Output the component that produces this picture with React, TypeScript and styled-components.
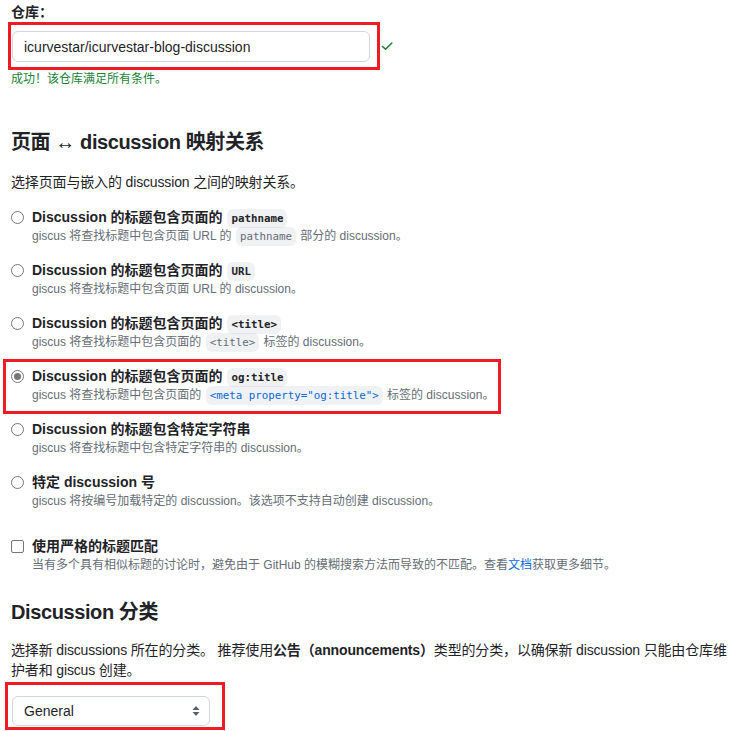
import React from 'react';
import styled, { createGlobalStyle } from 'styled-components';

const GlobalStyle = createGlobalStyle`
  body {
    margin: 0;
    background: #ffffff;
    color: #1f2328;
    font-family: "Liberation Sans", "Noto Sans CJK SC", sans-serif;
    font-size: 14px;
  }
`;

const Page = styled.div`
  width: 722px;
  padding: 2px 0 0 11px;
`;

const FieldLabel = styled.div`
  font-weight: 700;
  font-size: 14px;
  line-height: 20px;
`;

const InputRow = styled.div`
  display: flex;
  align-items: center;
`;

// red annotation frames drawn on the screenshot
const Highlight = styled.div<{ $pad: string; $margin: string; $width?: number }>`
  border: 3px solid #ed1c24;
  padding: ${(p) => p.$pad};
  margin: ${(p) => p.$margin};
  width: ${(p) => (p.$width ? `${p.$width}px` : 'auto')};
  box-sizing: border-box;
`;

const TextInput = styled.div`
  width: 358px;
  height: 31px;
  box-sizing: border-box;
  border: 1px solid #d0d7de;
  border-radius: 6px;
  padding: 0 11px;
  display: flex;
  align-items: center;
  font-size: 14px;
  color: #1f2328;
`;

const CheckIcon = styled.svg`
  width: 12px;
  height: 12px;
  margin-left: 1px;
  color: #1a7f37;
`;

const Success = styled.div`
  color: #1a7f37;
  font-size: 12px;
  line-height: 18px;
`;

const Heading = styled.h2<{ $top: number }>`
  margin: ${(p) => p.$top}px 0 0;
  font-size: 20px;
  font-weight: 700;
  line-height: 30px;
  letter-spacing: -0.4px;
`;

const Lead = styled.p<{ $top?: number }>`
  margin: ${(p) => p.$top ?? 15}px 0 0;
  font-size: 14px;
  line-height: 20px;
  letter-spacing: -0.15px;
`;

const OptionList = styled.div`
  display: flex;
  flex-direction: column;
  gap: 15px;
  margin-top: 15px;
`;

const Option = styled.div`
  display: flex;
  align-items: flex-start;
`;

const Radio = styled.span<{ $checked?: boolean }>`
  flex: none;
  width: 13px;
  height: 13px;
  box-sizing: border-box;
  border: 1px solid #767676;
  border-radius: 50%;
  margin: 4px 8px 0 0;
  display: flex;
  align-items: center;
  justify-content: center;
  &::after {
    content: '';
    display: ${(p) => (p.$checked ? 'block' : 'none')};
    width: 7px;
    height: 7px;
    border-radius: 50%;
    background: #767676;
  }
`;

const Checkbox = styled.span`
  flex: none;
  width: 13px;
  height: 13px;
  box-sizing: border-box;
  border: 1px solid #767676;
  border-radius: 2px;
  margin: 4px 8px 0 0;
`;

const OptionText = styled.div`
  display: flex;
  flex-direction: column;
`;

const OptionLabel = styled.div`
  font-weight: 700;
  font-size: 14px;
  line-height: 20px;
  height: 20px;
`;

const OptionDesc = styled.div`
  color: #656d76;
  font-size: 12px;
  line-height: 18px;
  height: 18px;
  white-space: nowrap;
`;

const Code = styled.code<{ $bold?: boolean; $blue?: boolean }>`
  font-family: "DejaVu Sans Mono", "Liberation Mono", monospace;
  font-size: 10.8px;
  line-height: 1;
  font-weight: ${(p) => (p.$bold ? 700 : 400)};
  color: ${(p) => (p.$blue ? '#0969da' : 'inherit')};
  background: rgba(175, 184, 193, 0.2);
  border-radius: 6px;
  padding: 3px 4px;
  margin: 0 1px;
`;

const Link = styled.a`
  color: #0969da;
  text-decoration: none;
`;

const StrictBlock = styled.div`
  margin-top: 26px;
`;

const SelectBox = styled.div`
  width: 198px;
  height: 30px;
  box-sizing: border-box;
  border: 1px solid #d0d7de;
  border-radius: 6px;
  padding: 0 9px 0 11px;
  display: flex;
  align-items: center;
  justify-content: space-between;
  font-size: 14px;
`;

const options = [
  {
    label: <>Discussion 的标题包含页面的 <Code $bold>pathname</Code></>,
    desc: <>giscus 将查找标题中包含页面 URL 的 <Code>pathname</Code> 部分的 discussion。</>,
  },
  {
    label: <>Discussion 的标题包含页面的 <Code $bold>URL</Code></>,
    desc: <>giscus 将查找标题中包含页面 URL 的 discussion。</>,
  },
  {
    label: <>Discussion 的标题包含页面的 <Code $bold>&lt;title&gt;</Code></>,
    desc: <>giscus 将查找标题中包含页面的 <Code>&lt;title&gt;</Code> 标签的 discussion。</>,
  },
  {
    label: <>Discussion 的标题包含页面的 <Code $bold>og:title</Code></>,
    desc: <>giscus 将查找标题中包含页面的 <Code $blue>&lt;meta property="og:title"&gt;</Code> 标签的 discussion。</>,
    checked: true,
  },
  {
    label: <>Discussion 的标题包含特定字符串</>,
    desc: <>giscus 将查找标题中包含特定字符串的 discussion。</>,
  },
  {
    label: <>特定 discussion 号</>,
    desc: <>giscus 将按编号加载特定的 discussion。该选项不支持自动创建 discussion。</>,
  },
];

const App: React.FC = () => {
  return (
    <Page>
      <GlobalStyle />
      <FieldLabel>仓库：</FieldLabel>
      <InputRow>
        <Highlight $pad="6px 7px 5px 1px" $margin="0 0 0 -3px">
          <TextInput>icurvestar/icurvestar-blog-discussion</TextInput>
        </Highlight>
        <CheckIcon viewBox="0 0 12 12" fill="none" stroke="currentColor" strokeWidth="1.6" strokeLinecap="round" strokeLinejoin="round">
          <path d="M1.5 6.5 L4.5 9.2 L10.8 3" />
        </CheckIcon>
      </InputRow>
      <Success>成功！该仓库满足所有条件。</Success>

      <Heading $top={39}>页面 ↔ discussion 映射关系</Heading>
      <Lead>选择页面与嵌入的 discussion 之间的映射关系。</Lead>

      <OptionList>
        {options.map((o, i) => {
          const row = (
            <Option>
              <Radio $checked={o.checked} />
              <OptionText>
                <OptionLabel>{o.label}</OptionLabel>
                <OptionDesc>{o.desc}</OptionDesc>
              </OptionText>
            </Option>
          );
          return o.checked ? (
            <Highlight key={i} $pad="4px 0 7px 5px" $margin="-7px 0 -10px -8px" $width={498}>
              {row}
            </Highlight>
          ) : (
            <React.Fragment key={i}>{row}</React.Fragment>
          );
        })}
      </OptionList>

      <StrictBlock>
        <Option>
          <Checkbox />
          <OptionText>
            <OptionLabel>使用严格的标题匹配</OptionLabel>
            <OptionDesc>
              当有多个具有相似标题的讨论时，避免由于 GitHub 的模糊搜索方法而导致的不匹配。查看<Link href="#">文档</Link>获取更多细节。
            </OptionDesc>
          </OptionText>
        </Option>
      </StrictBlock>

      <Heading $top={23}>Discussion 分类</Heading>
      <Lead $top={13}>
        选择新 discussions 所在的分类。 推荐使用<b>公告（announcements）</b>类型的分类，以确保新 discussion 只能由仓库维护者和 giscus 创建。
      </Lead>
      <Highlight $pad="11px 12px 1px 4px" $margin="2px 0 0 -6px" $width={220}>
        <SelectBox>
          General
          <svg width="8" height="12" viewBox="0 0 8 12" fill="#57606a">
            <path d="M4 1 L7.5 5 H0.5 Z" />
            <path d="M4 11 L7.5 7 H0.5 Z" />
          </svg>
        </SelectBox>
      </Highlight>
    </Page>
  );
};

export default App;
